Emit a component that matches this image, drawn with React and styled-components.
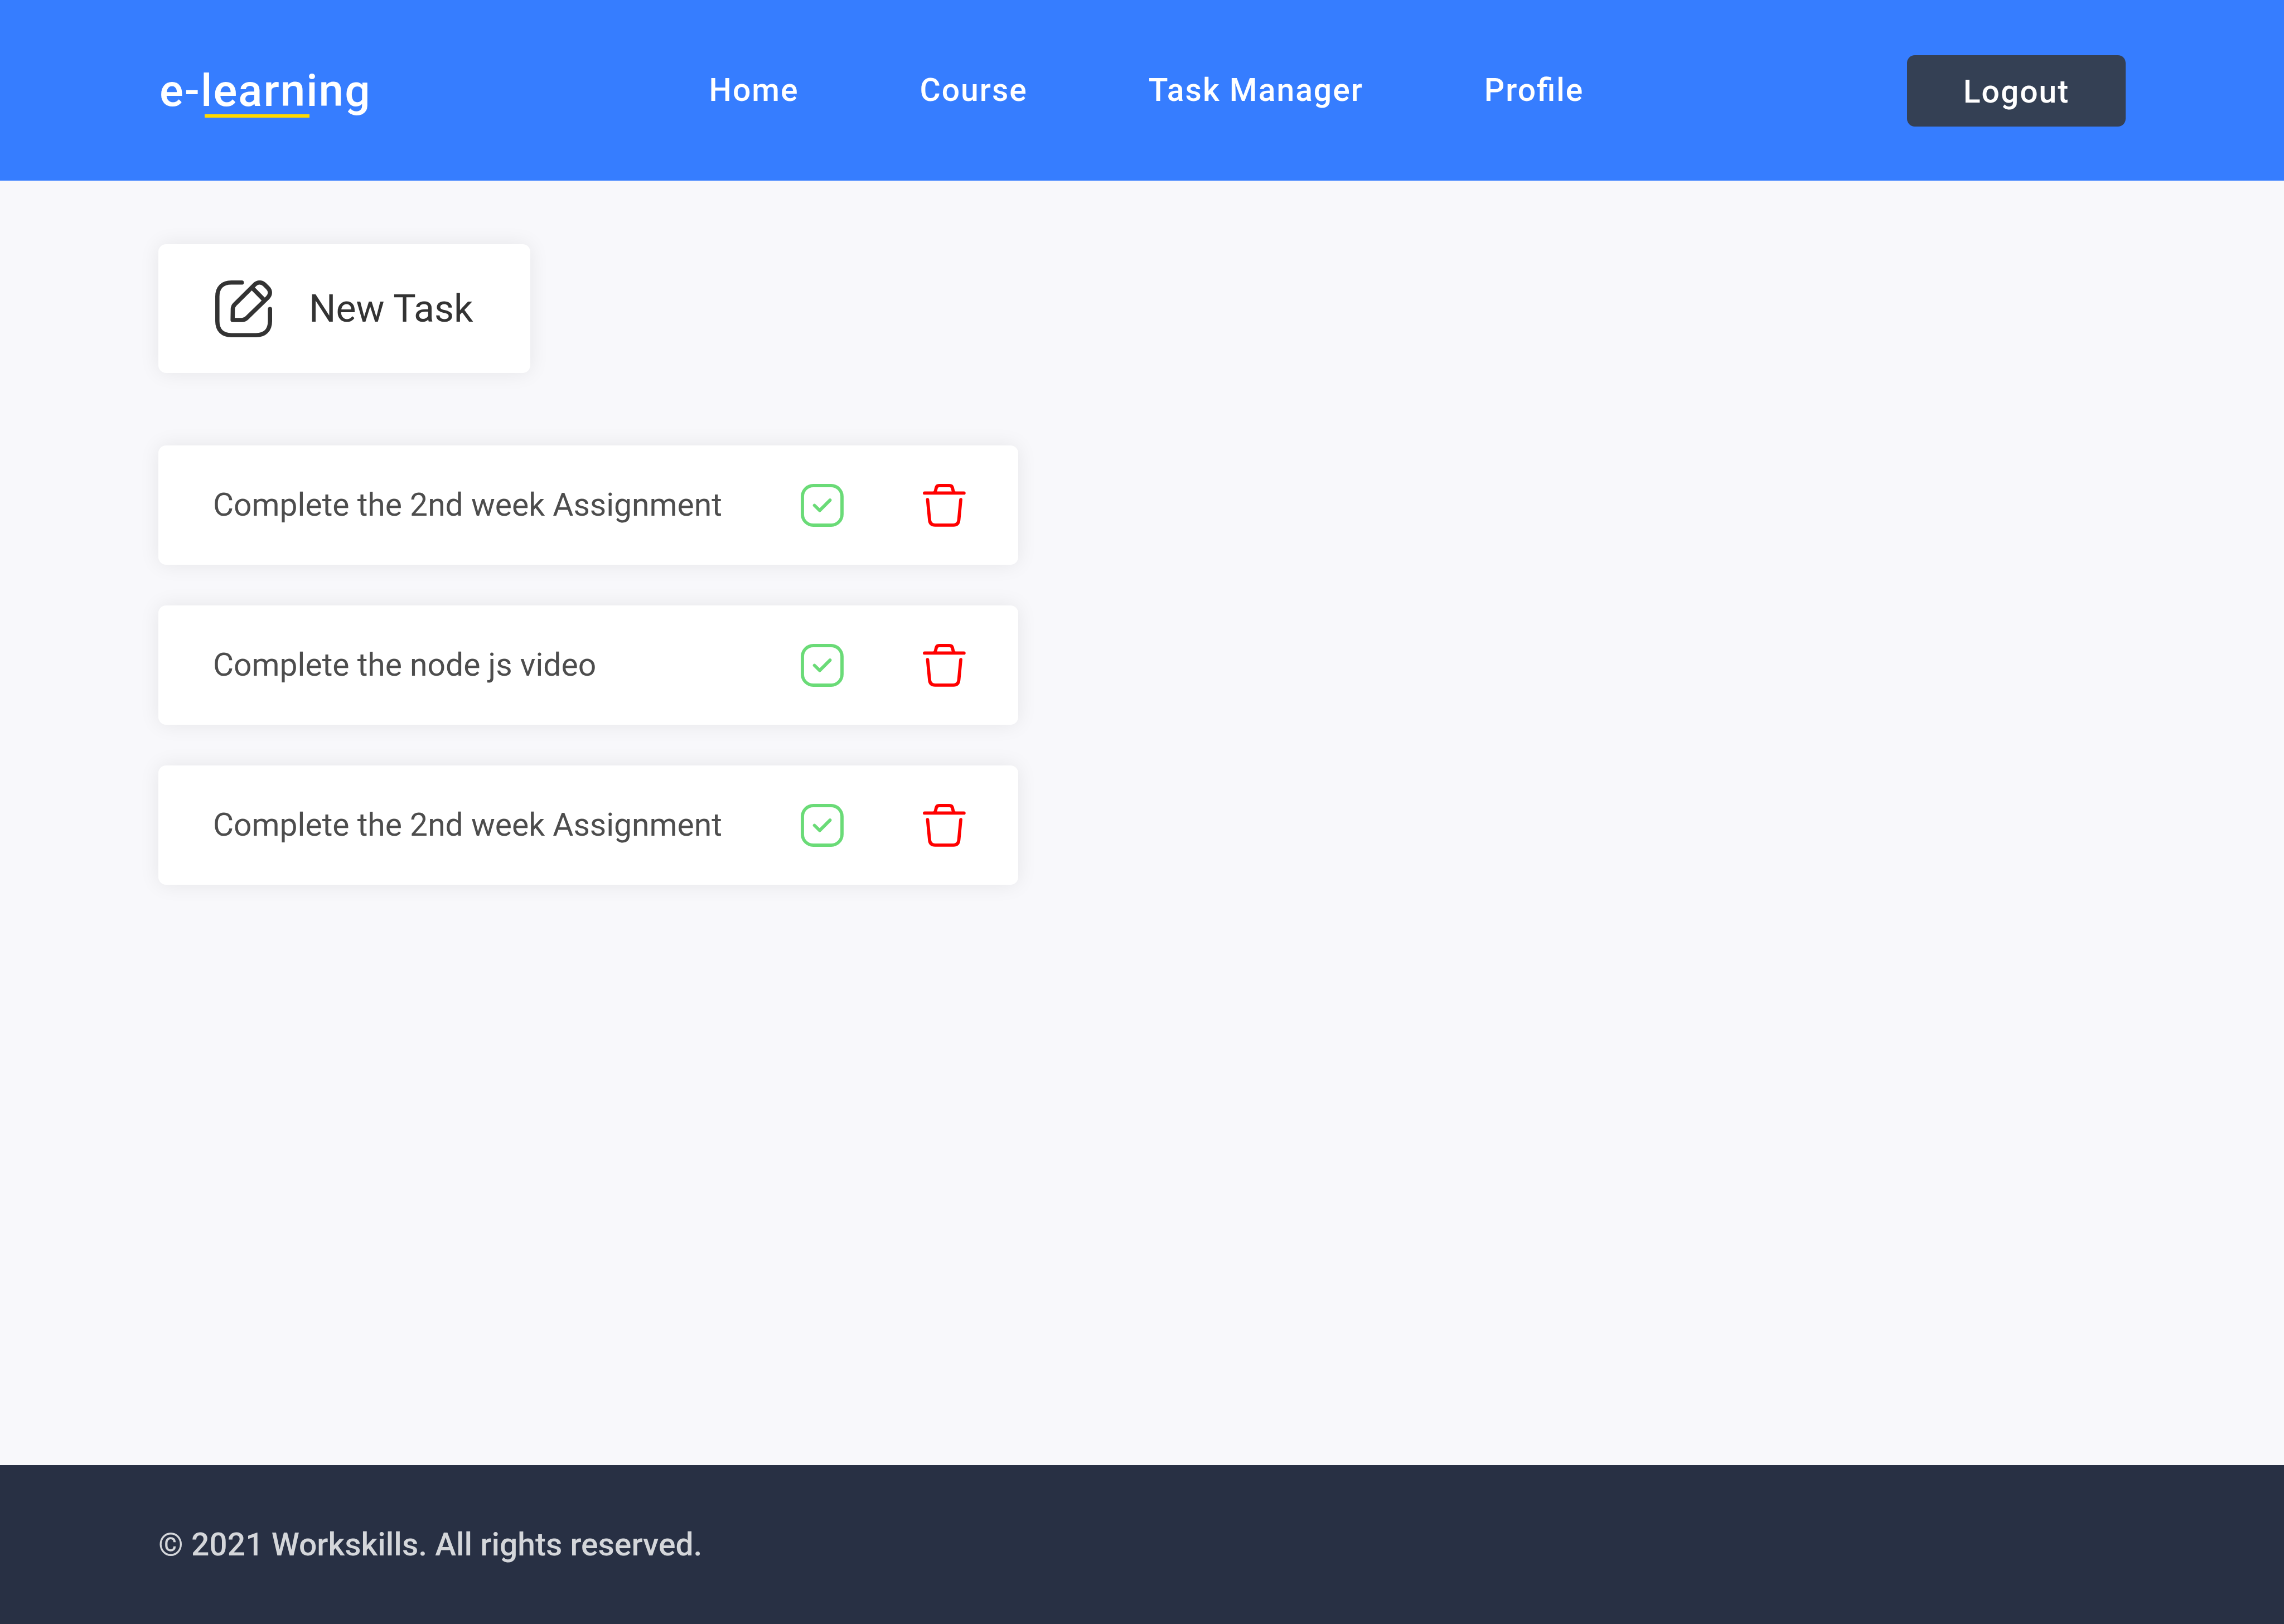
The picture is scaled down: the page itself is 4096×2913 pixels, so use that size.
import React from "react";
import styled, { createGlobalStyle } from "styled-components";

const GlobalStyle = createGlobalStyle`
  *, *::before, *::after { box-sizing: border-box; }
  body {
    margin: 0;
    background: #f8f8fb;
    font-family: Roboto, "Liberation Sans", sans-serif;
  }
  button { font-family: inherit; border: 0; cursor: pointer; }
`;

const Page = styled.div`
  display: flex;
  flex-direction: column;
  min-height: 100vh;
`;

const Header = styled.header`
  display: grid;
  grid-template-columns: 1fr auto 1fr;
  align-items: center;
  min-height: 324px;
  padding: 0 284px;
  background: #367dff;
  color: #fff;
`;

const Logo = styled.a`
  position: relative;
  justify-self: start;
  padding: 2px 0 0 2px;
  color: inherit;
  font-size: 80px;
  line-height: 96px;
  font-weight: 500;
  letter-spacing: 2px;
  text-decoration: none;
  &::after {
    content: "";
    position: absolute;
    left: 83px;
    top: 92px;
    width: 188px;
    height: 6px;
    background: #ffd900;
  }
`;

const Nav = styled.nav`
  display: flex;
  gap: 217px;
  padding-left: 16px;
`;

const NavLink = styled.a`
  color: inherit;
  font-size: 57px;
  line-height: 68px;
  font-weight: 500;
  letter-spacing: 2px;
  font-feature-settings: "liga" 1;
  text-decoration: none;
`;

const LogoutButton = styled.button`
  justify-self: end;
  width: 392px;
  height: 128px;
  margin-top: 2px;
  padding: 4px 0 0;
  border-radius: 14px;
  background: #344054;
  color: #fff;
  font-size: 57px;
  line-height: 68px;
  font-weight: 500;
  letter-spacing: 2px;
`;

const Main = styled.main`
  flex: 1;
  display: flex;
  flex-direction: column;
  align-items: flex-start;
  gap: 130px;
  padding: 114px 284px;
`;

const NewTaskButton = styled.button`
  display: flex;
  align-items: center;
  gap: 66px;
  height: 231px;
  padding: 0 102px;
  border-radius: 14px;
  background: #fff;
  box-shadow: 0 0 36px rgba(0, 0, 0, 0.08);
  color: #333;
  font-size: 68px;
  line-height: 80px;
`;

const TaskList = styled.ul`
  display: flex;
  flex-direction: column;
  gap: 73px;
  width: 1542px;
  max-width: 100%;
  margin: 0;
  padding: 0;
  list-style: none;
`;

const TaskItem = styled.li`
  display: flex;
  align-items: center;
  height: 214px;
  padding: 0 94px 0 98px;
  border-radius: 14px;
  background: #fff;
  box-shadow: 0 0 36px rgba(0, 0, 0, 0.08);
`;

const TaskTitle = styled.span`
  flex: 1;
  color: #4d4d4d;
  font-size: 57px;
  line-height: 68px;
`;

const TaskActions = styled.div`
  display: flex;
  gap: 142px;
`;

const IconButton = styled.button`
  display: flex;
  padding: 0;
  background: none;
  color: ${(p) => p.$color};
`;

const Footer = styled.footer`
  display: flex;
  align-items: center;
  min-height: 285px;
  padding: 0 284px;
  background: #283044;
  color: #d4d6da;
  font-size: 57px;
  line-height: 68px;
  font-weight: 500;
`;

const Icon = ({ size, width, children }) => (
  <svg
    width={size}
    height={size}
    viewBox={`0 0 ${size} ${size}`}
    fill="none"
    stroke="currentColor"
    strokeWidth={width}
    strokeLinecap="round"
    strokeLinejoin="round"
    aria-hidden="true"
  >
    {children}
  </svg>
);

const EditIcon = () => (
  <Icon size={102} width={7.6}>
    <path d="M47.6 3.8H29C13 3.8 3.8 13 3.8 29V73C3.8 89 13 98.2 29 98.2H73C89 98.2 98.2 89 98.2 73V51.3" />
    <path d="M31.2 71L31.5 52C31.5 48 32.5 45.5 35 43L71 7.3C76 2.5 83.5 2.5 88.5 7.5L94 13C99.5 18.5 99.5 25.5 94 31L57 67C54 70 51.5 71 48 71Z" />
    <path d="M66 13L88 35.5" />
  </Icon>
);

const CheckIcon = () => (
  <Icon size={77} width={5.8}>
    <rect x="3" y="3" width="71" height="71" rx="19.5" />
    <path d="M24.6 38.5L34 47.6L52.5 29.1" />
  </Icon>
);

const TrashIcon = () => (
  <Icon size={77} width={5.8}>
    <path d="M3 16.4H73.8" />
    <path d="M20.5 16C22 15 22.5 13.5 23 11L24 7C24.7 4 26.3 3 29 3H48C50.7 3 52.3 4 53 7L54 11C54.5 13.5 55 15 56.5 16" />
    <path d="M8.5 28.2L12 64.5C12.5 70.5 16 73.8 22 73.8H55C61 73.8 64 70.5 64.5 64.5L68 28.2" />
  </Icon>
);

const links = ["Home", "Course", "Task Manager", "Profile"];

const tasks = [
  { id: 1, title: "Complete the 2nd week Assignment" },
  { id: 2, title: "Complete the node js video" },
  { id: 3, title: "Complete the 2nd week Assignment" },
];

export default function App() {
  return (
    <Page>
      <GlobalStyle />
      <Header>
        <Logo href="#">e-learning</Logo>
        <Nav aria-label="Main">
          {links.map((label) => (
            <NavLink key={label} href="#">{label}</NavLink>
          ))}
        </Nav>
        <LogoutButton type="button">Logout</LogoutButton>
      </Header>
      <Main>
        <NewTaskButton type="button">
          <EditIcon />
          New Task
        </NewTaskButton>
        <TaskList>
          {tasks.map((task) => (
            <TaskItem key={task.id}>
              <TaskTitle>{task.title}</TaskTitle>
              <TaskActions>
                <IconButton type="button" $color="#6adb77" aria-label="Mark as done">
                  <CheckIcon />
                </IconButton>
                <IconButton type="button" $color="#ff0000" aria-label="Delete task">
                  <TrashIcon />
                </IconButton>
              </TaskActions>
            </TaskItem>
          ))}
        </TaskList>
      </Main>
      <Footer>© 2021 Workskills. All rights reserved.</Footer>
    </Page>
  );
}
